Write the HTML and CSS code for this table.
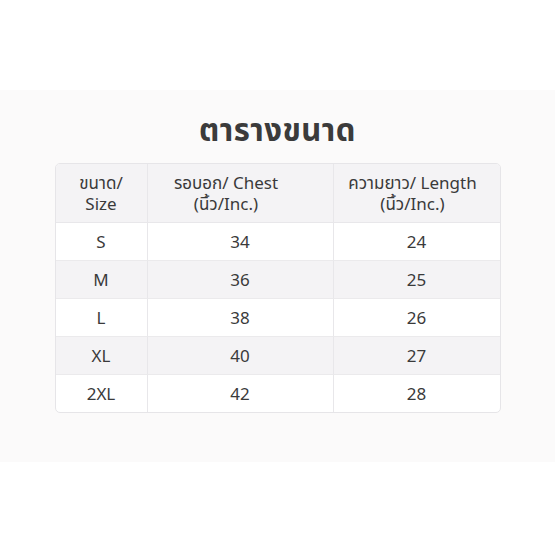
FILE: index.html
```html
<!DOCTYPE html>
<html lang="th">
<head>
<meta charset="utf-8">
<link rel="stylesheet" href="styles.css">
</head>
<body>
<div class="band">
  <h1 class="title">ตารางขนาด</h1>
  <table class="sizes">
    <colgroup>
      <col class="c1">
      <col class="c2">
      <col class="c3">
    </colgroup>
    <thead>
      <tr>
        <th>ขนาด/<br>Size</th>
        <th class="h2">รอบอก/ Chest<br>(นิ้ว/Inc.)</th>
        <th class="h3">ความยาว/ Length<br>(นิ้ว/Inc.)</th>
      </tr>
    </thead>
    <tbody>
      <tr><td>S</td><td>34</td><td>24</td></tr>
      <tr class="alt"><td>M</td><td>36</td><td>25</td></tr>
      <tr><td>L</td><td>38</td><td>26</td></tr>
      <tr class="alt"><td>XL</td><td>40</td><td>27</td></tr>
      <tr><td>2XL</td><td>42</td><td>28</td></tr>
    </tbody>
  </table>
</div>
</body>
</html>
```
FILE: styles.css
```css
html, body {
  margin: 0;
  padding: 0;
  background: #ffffff;
  font-family: "Noto Sans", "Noto Sans Thai", sans-serif;
  color: #3a3a3a;
}
body {
  padding-top: 90px;
}
.band {
  background: #fbfafa;
  height: 372px;
  display: flex;
  flex-direction: column;
  align-items: center;
}
.title {
  margin: 19px 0 0 0;
  font-size: 31px;
  font-weight: 700;
  line-height: 40px;
  color: #3b3b3b;
  letter-spacing: 0.5px;
}
.sizes {
  margin-top: 14px;
  width: 446px;
  table-layout: fixed;
  border-collapse: separate;
  border-spacing: 0;
  border: 1px solid #e6e5e8;
  border-radius: 5px;
  background: #ffffff;
  overflow: hidden;
  font-size: 17px;
}
.c1 { width: 91px; }
.c2 { width: 186px; }
.sizes th {
  font-weight: 400;
  background: #f4f3f5;
  height: 58px;
  line-height: 21px;
  padding: 0;
  text-align: center;
  border-bottom: 1px solid #e8e7ea;
  white-space: nowrap;
}
.sizes td {
  height: 37px;
  padding: 0;
  text-align: center;
  border-top: 1px solid #ebeaec;
}
.sizes tbody tr:first-child td {
  border-top: none;
}
.sizes th + th, .sizes td + td {
  border-left: 1px solid #e8e7ea;
}
.sizes th.h2 { padding-right: 28px; }
.sizes th.h3 { padding-right: 8px; }
.alt td {
  background: #f4f3f5;
}
```
